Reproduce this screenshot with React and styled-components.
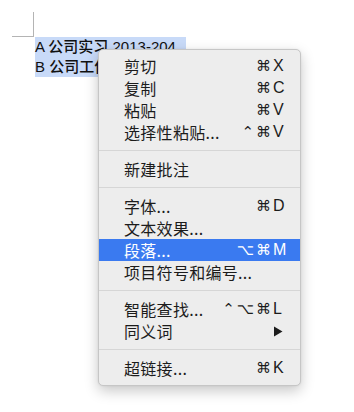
import React from "react";
import styled, { createGlobalStyle } from "styled-components";

const Global = createGlobalStyle`
  html, body { margin: 0; padding: 0; background: #ffffff; }
  body { font-family: "Liberation Sans", "Noto Sans CJK SC", "DejaVu Sans", sans-serif; }
`;

const Page = styled.div`
  position: relative;
  width: 354px;
  height: 412px;
  overflow: hidden;
  background: #ffffff;
`;

const Doc = styled.div`
  display: flex;
  flex-direction: column;
  padding: 12px 0 0 12px;
`;

const CropMark = styled.div`
  width: 21px;
  height: 24px;
  border-right: 1px solid #b4b4b4;
  border-bottom: 1px solid #b4b4b4;
`;

const Lines = styled.div`
  display: flex;
  flex-direction: column;
  align-items: flex-start;
  margin-left: 23px;
`;

const Line = styled.div`
  height: 20px;
  line-height: 20px;
  font-size: 15px;
  color: #111;
  background: #c8daf8;
  padding-right: ${(p) => p.$tail}px;
  white-space: nowrap;
  font-weight: 500;
`;

const Menu = styled.div`
  position: absolute;
  left: 98px;
  top: 49px;
  width: 203px;
  box-sizing: border-box;
  padding: 5px 0 6px;
  background: #ededed;
  border: 1px solid #c6c6c6;
  border-radius: 5px;
  box-shadow: 0 5px 14px rgba(0, 0, 0, 0.22), 0 0 2px rgba(0, 0, 0, 0.08);
  display: flex;
  flex-direction: column;
`;

const Item = styled.div`
  height: 22px;
  display: grid;
  grid-template-columns: 1fr auto 15px;
  align-items: center;
  padding: 0 12px 0 25px;
  font-size: 16px;
  color: ${(p) => (p.$active ? "#ffffff" : "#1c1c1c")};
  background: ${(p) => (p.$active ? "#3a7af0" : "transparent")};
`;

const Label = styled.span`
  font-family: "Noto Sans CJK SC", "Liberation Sans", sans-serif;
  font-size: 16px;
  line-height: 22px;
  letter-spacing: 0.3px;
  white-space: nowrap;
`;

const Mods = styled.span`
  font-family: "DejaVu Sans", "Liberation Sans", sans-serif;
  font-size: 15px;
  text-align: right;
  letter-spacing: 2px;
  white-space: nowrap;
`;

const Key = styled.span`
  font-family: "Liberation Sans", "DejaVu Sans", sans-serif;
  font-size: 16px;
  text-align: left;
  display: flex;
  align-items: center;
`;

const Separator = styled.div`
  height: 1px;
  margin: 7px 0;
  background: #d6d6d6;
`;

const Arrow = () => (
  <svg width="10" height="11" viewBox="0 0 10 11">
    <path d="M1 0.5 L9.5 5.5 L1 10.5 Z" fill="#1c1c1c" />
  </svg>
);

const groups = [
  [
    { label: "剪切", mods: "⌘", key: "X" },
    { label: "复制", mods: "⌘", key: "C" },
    { label: "粘贴", mods: "⌘", key: "V" },
    { label: "选择性粘贴...", mods: "⌃⌘", key: "V" },
  ],
  [{ label: "新建批注" }],
  [
    { label: "字体...", mods: "⌘", key: "D" },
    { label: "文本效果..." },
    { label: "段落...", mods: "⌥⌘", key: "M", active: true },
    { label: "项目符号和编号..." },
  ],
  [
    { label: "智能查找...", mods: "⌃⌥⌘", key: "L" },
    { label: "同义词", arrow: true },
  ],
  [{ label: "超链接...", mods: "⌘", key: "K" }],
];

export default function App() {
  return (
    <Page>
      <Global />
      <Doc>
        <CropMark />
        <Lines>
          <Line $tail={10}>A 公司实习 2013-204</Line>
          <Line $tail={10}>B 公司工作 2014</Line>
        </Lines>
      </Doc>
      <Menu>
        {groups.map((g, gi) => (
          <React.Fragment key={gi}>
            {gi > 0 && <Separator />}
            {g.map((it) => (
              <Item key={it.label} $active={it.active}>
                <Label>{it.label}</Label>
                <Mods>{it.mods || ""}</Mods>
                <Key>{it.arrow ? <Arrow /> : it.key || ""}</Key>
              </Item>
            ))}
          </React.Fragment>
        ))}
      </Menu>
    </Page>
  );
}
